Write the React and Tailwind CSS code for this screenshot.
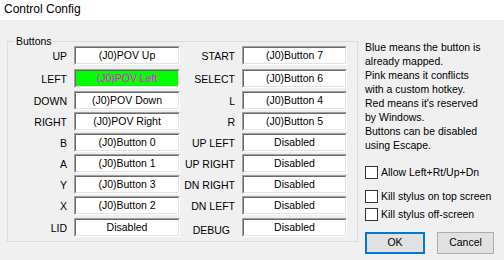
import React from 'react';

const leftRows = [
  { label: 'UP', value: '(J0)POV Up' },
  { label: 'LEFT', value: '(J0)POV Left', hot: true },
  { label: 'DOWN', value: '(J0)POV Down' },
  { label: 'RIGHT', value: '(J0)POV Right' },
  { label: 'B', value: '(J0)Button 0' },
  { label: 'A', value: '(J0)Button 1' },
  { label: 'Y', value: '(J0)Button 3' },
  { label: 'X', value: '(J0)Button 2' },
  { label: 'LID', value: 'Disabled' },
];

const rightRows = [
  { label: 'START', value: '(J0)Button 7' },
  { label: 'SELECT', value: '(J0)Button 6' },
  { label: 'L', value: '(J0)Button 4' },
  { label: 'R', value: '(J0)Button 5' },
  { label: 'UP LEFT', value: 'Disabled' },
  { label: 'UP RIGHT', value: 'Disabled' },
  { label: 'DN RIGHT', value: 'Disabled' },
  { label: 'DN LEFT', value: 'Disabled' },
  { label: 'DEBUG', value: 'Disabled', odd: true },
];

// spacing between rows isn't perfectly even in the original dialog
const rowGaps = ['mt-0', 'mt-[4px]', 'mt-[3px]', 'mt-[2px]', 'mt-[2px]', 'mt-[2px]', 'mt-[2px]', 'mt-[2px]', 'mt-[2px]'];

function Field({ value, hot, width }) {
  return (
    <div className={`${width} h-[19px] border border-t-[#a0a0a0] border-l-[#a0a0a0] border-b-white border-r-white`}>
      <div
        className={`h-full flex items-center justify-center border border-t-[#696969] border-l-[#696969] border-b-[#e3e3e3] border-r-[#e3e3e3] ${
          hot ? 'bg-[#00ff00] text-[#ff00ff]' : 'bg-white text-black'
        }`}
      >
        {value}
      </div>
    </div>
  );
}

function Checkbox({ label, className }) {
  return (
    <div className={`flex items-center h-[13px] ${className}`}>
      <div className="w-[13px] h-[13px] border border-[#333333] bg-white" />
      <span className="ml-[3px] leading-[13px]">{label}</span>
    </div>
  );
}

export default function App() {
  return (
    <div className="w-[504px] h-[260px] bg-[#f0f0f0] text-black text-[10.5px] font-['Liberation_Sans',Arial,sans-serif] overflow-hidden">
      {/* Title bar */}
      <div className="h-[20px] bg-white flex items-center px-[4px] text-[12px] pb-[2px]">Control Config</div>

      <div className="flex">
        {/* Buttons group */}
        <div className="relative mt-[21px] ml-[7px] w-[351px] h-[201px] border border-[#dcdcdc] pt-[4px]">
          <span className="absolute -top-[7px] left-[6px] bg-[#f0f0f0] px-[2px] leading-[12px]">Buttons</span>
          {leftRows.map((l, i) => {
            const r = rightRows[i];
            return (
              <div key={l.label} className={`flex items-center ${rowGaps[i]}`}>
                <div className="w-[59px] text-right pt-[2px]">{l.label}</div>
                <div className="ml-[7px]">
                  <Field value={l.value} hot={l.hot} width="w-[106px]" />
                </div>
                <div className={`w-[54px] ml-[1px] text-right ${r.odd ? 'pr-[5px] pt-[6px]' : 'pt-[2px]'}`}>{r.label}</div>
                <div className="ml-[7px]">
                  <Field value={r.value} width="w-[105px]" />
                </div>
              </div>
            );
          })}
        </div>

        {/* Help text, options and buttons */}
        <div className="ml-[7px] mt-[20px] flex flex-col">
          <p className="leading-[14px]">
            Blue means the button is
            <br />
            already mapped.
            <br />
            Pink means it conflicts
            <br />
            with a custom hotkey.
            <br />
            Red means it's reserved
            <br />
            by Windows.
            <br />
            Buttons can be disabled
            <br />
            using Escape.
          </p>
          <Checkbox label="Allow Left+Rt/Up+Dn" className="mt-[14px]" />
          <Checkbox label="Kill stylus on top screen" className="mt-[11px]" />
          <Checkbox label="Kill stylus off-screen" className="mt-[5px]" />
          <div className="flex mt-[11px]">
            <button className="w-[60px] h-[22px] border-2 border-[#0078d7] bg-[#e1e1e1] flex items-center justify-center">OK</button>
            <button className="ml-[12px] w-[57px] h-[22px] border border-[#adadad] bg-[#e1e1e1] flex items-center justify-center">Cancel</button>
          </div>
        </div>
      </div>
    </div>
  );
}
